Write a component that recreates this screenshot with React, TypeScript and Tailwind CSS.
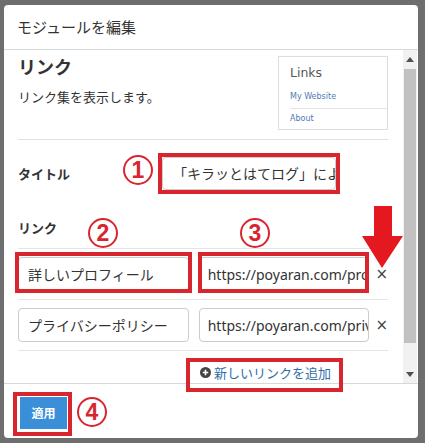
import React from "react";

const jp = { fontFamily: '"Noto Sans CJK JP", "Noto Sans", sans-serif' };

function Circled({ n, className }: { n: string; className: string }) {
  return (
    <div
      className={`absolute w-[30px] h-[30px] rounded-full border-[2px] border-[#d8262f] flex items-center justify-center text-[#d8262f] text-[23px] font-bold leading-none ${className}`}
      style={{ fontFamily: '"Liberation Sans", Arial, sans-serif' }}
    >
      {n}
    </div>
  );
}

function RedBox({ className }: { className: string }) {
  return <div className={`absolute border-[4px] border-[#d8262f] ${className}`} />;
}

function LinkRow({ name, url, last }: { name: string; url: string; last?: boolean }) {
  return (
    <div className={`flex items-center border-t border-[#e5e5e5] py-[8px] ${last ? "border-b" : ""}`}>
      <div className="w-[172px] h-[34px] border border-[#ccc] rounded-[4px] px-[9px] flex items-center text-[14px] text-[#333] overflow-hidden whitespace-nowrap">
        {name}
      </div>
      <div
        className="ml-[10px] w-[172px] h-[34px] border border-[#ccc] rounded-[4px] px-[8px] flex items-center text-[14px] text-[#333] overflow-hidden whitespace-nowrap"
        style={{ fontFamily: '"Noto Sans", "Open Sans", sans-serif' }}
      >
        {url}
      </div>
      <span className="ml-[6px] text-[#444] text-[15px] leading-none" style={{ fontFamily: '"DejaVu Sans", sans-serif' }}>
        ×
      </span>
    </div>
  );
}

export default function App() {
  return (
    <div className="relative w-[425px] h-[443px] bg-[#6e6e6e] pl-[4px] pt-[5px] overflow-hidden" style={jp}>
      <div className="w-[414px] h-[433px] bg-white rounded-[4px] flex flex-col overflow-hidden">
        <div className="h-[45px] border-b border-[#d5d9dc] flex items-center pl-[13px] text-[15px] text-[#333]">
          モジュールを編集
        </div>

        <div className="h-[333px] flex">
          <div className="flex-1 overflow-hidden pl-[14px] pr-[15px]">
            <div className="flex justify-between items-start pt-[6px]">
              <div>
                <div className="text-[18px] font-bold leading-[20px] text-[#333]">リンク</div>
                <div className="mt-[11px] text-[13px] leading-[20px] text-[#333]">リンク集を表示します。</div>
              </div>
              <div className="w-[110px] h-[74px] border border-[#ddd] pt-[4px]" style={{ fontFamily: '"DejaVu Sans", sans-serif' }}>
                <div className="h-[24px] flex items-center pl-[11px] text-[12.5px] text-[#555]">Links</div>
                <div className="h-[23px] flex items-center pl-[11px] text-[8px] text-[#4b7db3]">My Website</div>
                <div className="ml-[11px] h-[20px] border-t border-[#e4e4e4] flex items-center text-[8px] text-[#4b7db3]">About</div>
              </div>
            </div>

            <div className="mt-[9px] border-t border-[#e0e0e0]" />

            <div className="mt-[17px] flex items-center">
              <div className="w-[144px] text-[13px] font-bold text-[#333]">タイトル</div>
              <div className="w-[174px] h-[33px] border border-[#ccc] rounded-[4px] pl-[10px] flex items-center text-[14px] text-[#333] overflow-hidden whitespace-nowrap">
                「キラッとはてログ」にようこそ
              </div>
            </div>

            <div className="mt-[28px] text-[13px] leading-[20px] font-bold text-[#333]">リンク</div>

            <div className="mt-[10px]">
              <LinkRow name="詳しいプロフィール" url="https://poyaran.com/profile" />
              <LinkRow name="プライバシーポリシー" url="https://poyaran.com/privacy-policy" last />
            </div>

            <div className="mt-[12px] pl-[182px] flex items-center text-[13px] text-[#2f6ea8]">
              <svg width="11" height="11" viewBox="0 0 12 12" className="mr-[3px]">
                <circle cx="6" cy="6" r="6" fill="#444" />
                <path d="M6 3v6M3 6h6" stroke="#fff" strokeWidth="1.8" />
              </svg>
              新しいリンクを追加
            </div>
          </div>

          <div className="w-[14px] mr-[1px] bg-[#f1f1f1] flex flex-col items-center">
            <div className="h-[18px] flex items-center justify-center">
              <svg width="8" height="5" viewBox="0 0 8 5"><path d="M0 5L4 0L8 5Z" fill="#505050" /></svg>
            </div>
            <div className="mt-[1px] w-[12px] h-[274px] bg-[#c1c1c1]" />
            <div className="flex-1" />
            <div className="h-[18px] flex items-center justify-center">
              <svg width="8" height="5" viewBox="0 0 8 5"><path d="M0 0L4 5L8 0Z" fill="#505050" /></svg>
            </div>
          </div>
        </div>

        <div className="flex-1 border-t border-[#d5d9dc] pt-[13px] pl-[16px]">
          <div className="w-[47px] h-[32px] bg-[#3a8fd8] flex items-center justify-center text-white text-[12px] font-bold">
            適用
          </div>
        </div>
      </div>

      {/* annotations */}
      <RedBox className="left-[158px] top-[153px] w-[182px] h-[41px]" />
      <RedBox className="left-[15px] top-[252px] w-[177px] h-[41px]" />
      <RedBox className="left-[198px] top-[252px] w-[171px] h-[41px]" />
      <RedBox className="left-[186px] top-[358px] w-[157px] h-[34px]" />
      <RedBox className="left-[13px] top-[392px] w-[59px] h-[44px]" />

      <Circled n="1" className="left-[123px] top-[155px]" />
      <Circled n="2" className="left-[88px] top-[218px]" />
      <Circled n="3" className="left-[240px] top-[218px]" />
      <Circled n="4" className="left-[77px] top-[397px]" />

      <svg className="absolute left-[362px] top-[206px]" width="42" height="64" viewBox="0 0 42 64">
        <path d="M12 0H30V30H41L20 62L0 30H12Z" fill="#e3191f" />
      </svg>
    </div>
  );
}
